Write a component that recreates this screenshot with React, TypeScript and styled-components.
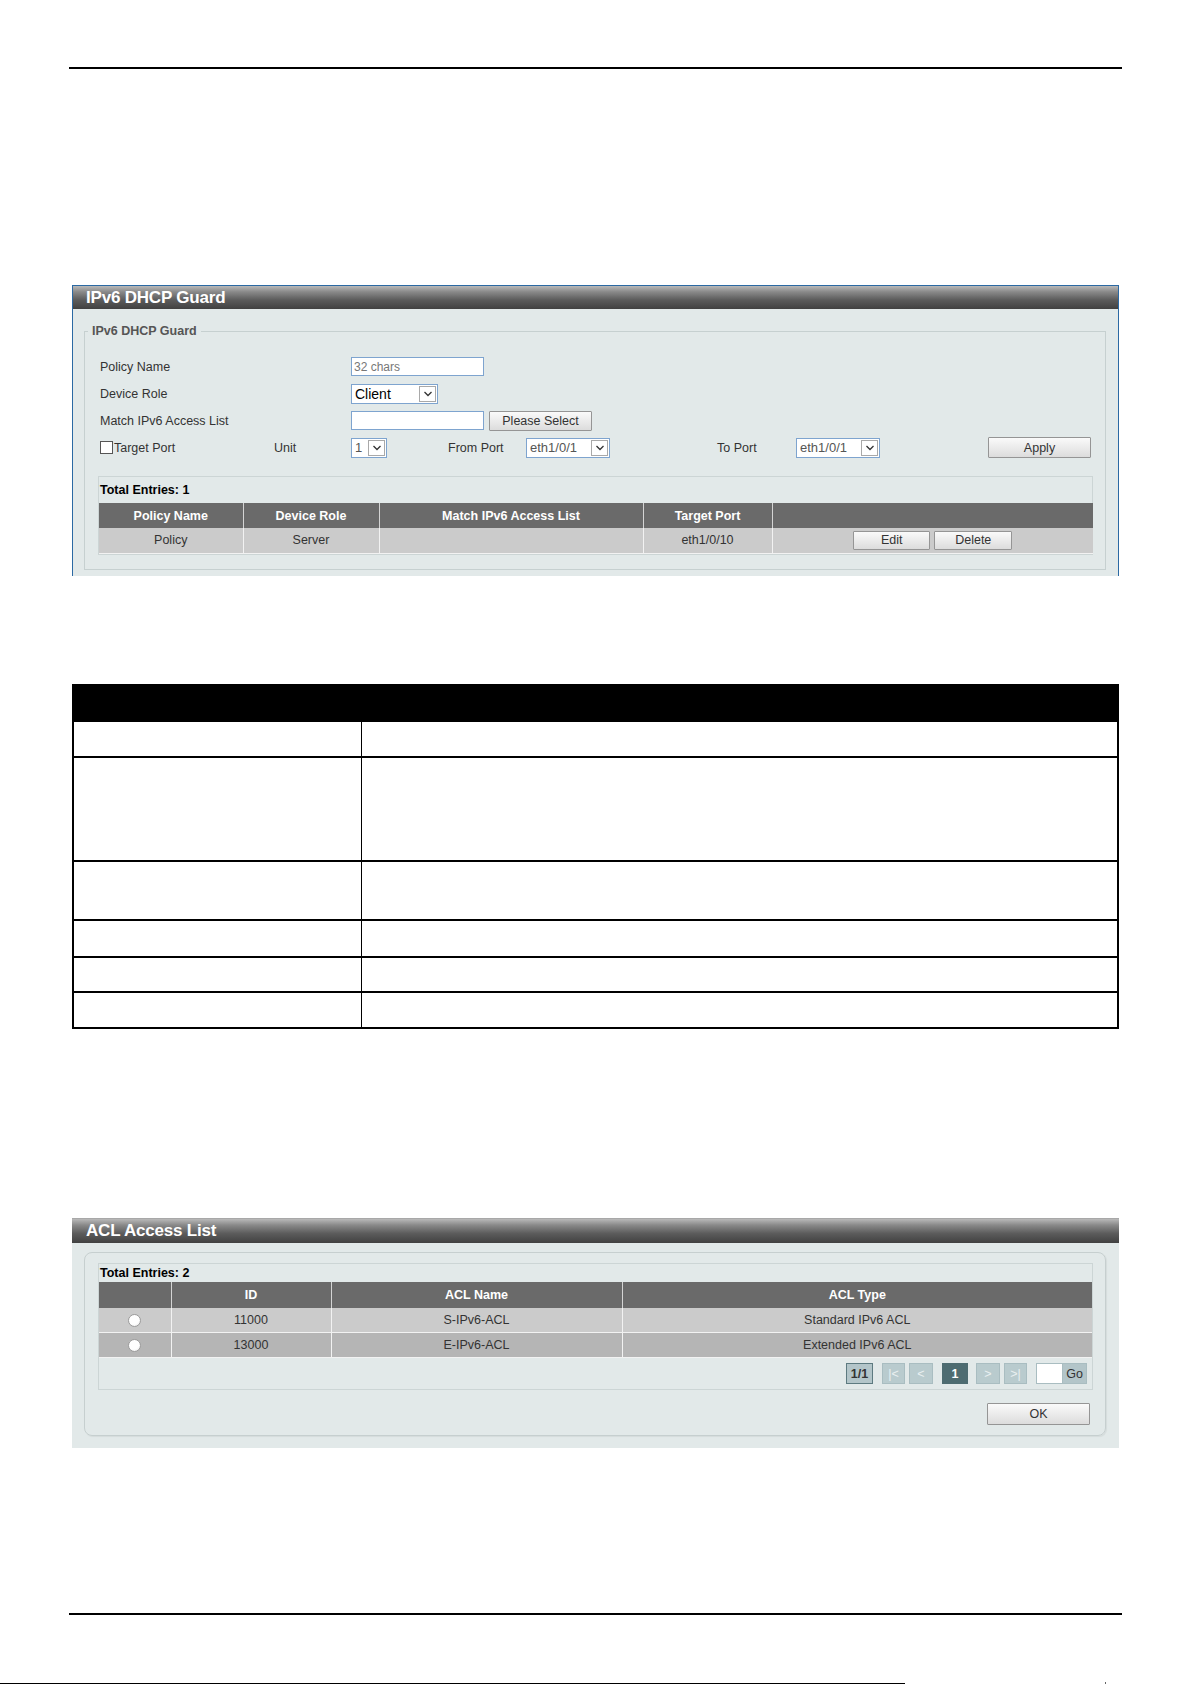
import React from "react";
import styled, { createGlobalStyle } from "styled-components";

const GlobalStyle = createGlobalStyle`
  html, body {
    margin: 0;
    padding: 0;
    background: #fff;
  }
  body {
    font-family: "Liberation Sans", Arial, sans-serif;
    font-size: 12.5px;
    color: #333;
  }
  * {
    box-sizing: border-box;
  }
`;

const Page = styled.div`
  width: 1192px;
  height: 1684px;
  display: flex;
  flex-direction: column;
  overflow: hidden;

  & > * {
    flex-shrink: 0;
  }
`;

const Rule = styled.div<{ $top: number }>`
  margin: ${(p) => p.$top}px 0 0 69px;
  width: 1053px;
  height: 2px;
  background: #000;
`;

const Footer = styled.div`
  margin-top: 67px;
  display: flex;
  align-items: flex-end;
  height: 2px;
`;

const FooterLine = styled.div`
  width: 905px;
  height: 1px;
  background: #000;
`;

const FooterTick = styled.div`
  margin-left: 200px;
  width: 1px;
  height: 2px;
  background: #666;
`;

/* ---- web panel ---- */

const Panel = styled.section<{ $top: number; $framed?: boolean }>`
  margin: ${(p) => p.$top}px 0 0 72px;
  width: 1047px;
  background: #e2e9e9;
  border-top: 1px solid ${(p) => (p.$framed ? "#2b69a3" : "#a8a8a8")};
  border-left: ${(p) => (p.$framed ? "1px solid #2b69a3" : "none")};
  border-right: ${(p) => (p.$framed ? "1px solid #2b69a3" : "none")};
`;

const PanelTitle = styled.div<{ $h: number; $pad: number }>`
  height: ${(p) => p.$h}px;
  padding-left: ${(p) => p.$pad}px;
  display: flex;
  align-items: center;
  background: linear-gradient(#b9b9b9 0%, #8a8a8a 25%, #5c5c5c 60%, #414141 100%);
  color: #fff;
  font-weight: bold;
  font-size: 17px;
  letter-spacing: -0.2px;
`;

const PanelBody = styled.div<{ $pad: string }>`
  padding: ${(p) => p.$pad};
`;

const Group = styled.fieldset`
  margin: 0 12px 0 11px;
  padding: 0 12px 14px 13px;
  border: 1px solid #c6d0d0;
  min-width: 0;
`;

const GroupLegend = styled.legend`
  margin-left: -10px;
  padding: 0 4px;
  font-weight: bold;
  color: #555;
  font-size: 12.5px;
  line-height: 14px;
`;

const RoundGroup = styled.div`
  margin: 0 13px 0 12px;
  padding: 10px 12px 10px 13px;
  border: 1px solid #c6cfcf;
  border-radius: 8px;
  box-shadow: 1px 1px 1px rgba(0, 0, 0, 0.06);
`;

const Form = styled.div`
  margin-top: 15px;
  padding-left: 2px;
  display: flex;
  flex-direction: column;
`;

const FormRow = styled.div`
  height: 27px;
  display: flex;
  align-items: center;
`;

const Cell = styled.div<{ $w: number }>`
  width: ${(p) => p.$w}px;
  flex: none;
  display: flex;
  align-items: center;
  color: #333;
`;

const TextInput = styled.input<{ $w: number }>`
  width: ${(p) => p.$w}px;
  height: 19px;
  border: 1px solid #7ea4cf;
  background: #fff;
  padding: 0 2px;
  font: 12px "Liberation Sans", Arial, sans-serif;
  color: #000;
  outline: none;
  &::placeholder {
    color: #777;
  }
`;

const SelectBox = styled.div<{ $w: number; $muted?: boolean }>`
  width: ${(p) => p.$w}px;
  height: 20px;
  border: 1px solid #7ea4cf;
  background: #fff;
  display: flex;
  align-items: center;
  justify-content: space-between;
  padding: 0 1px 0 3px;
  font-size: ${(p) => (p.$muted ? 13 : 14)}px;
  color: ${(p) => (p.$muted ? "#555" : "#000")};
`;

const SelectArrow = styled.span`
  width: 17px;
  height: 16px;
  border: 1px solid #a9a9a9;
  background: #fff;
  display: flex;
  align-items: center;
  justify-content: center;
`;

const Button = styled.button<{ $w: number; $h?: number; $gap?: number }>`
  width: ${(p) => p.$w}px;
  height: ${(p) => p.$h ?? 20}px;
  margin-left: ${(p) => p.$gap ?? 0}px;
  padding: 0;
  border: 1px solid #959595;
  border-radius: 1px;
  background: linear-gradient(#fafafa, #dcdcdc);
  font: 12.5px "Liberation Sans", Arial, sans-serif;
  color: #333;
`;

const Check = styled.span`
  width: 13px;
  height: 13px;
  margin-right: 1px;
  border: 1px solid #555;
  background: #fff;
`;

/* ---- entry lists ---- */

const ListBox = styled.div<{ $top: number }>`
  margin-top: ${(p) => p.$top}px;
  border: 1px solid #ccd5d5;
`;

const Total = styled.div<{ $h: number }>`
  height: ${(p) => p.$h}px;
  padding-left: 1px;
  display: flex;
  align-items: center;
  font-weight: bold;
  color: #000;
`;

const Grid = styled.table`
  width: 100%;
  border-collapse: collapse;
  table-layout: fixed;
`;

const Col = styled.col<{ $w: number }>`
  width: ${(p) => p.$w}px;
`;

const Th = styled.th<{ $h: number }>`
  height: ${(p) => p.$h}px;
  padding: 0;
  background: #6a6a6a;
  color: #fff;
  font-weight: bold;
  font-size: 12.5px;
  text-align: center;
  border-left: 1px solid #d4d4d4;
  &:first-child {
    border-left: none;
  }
`;

const Td = styled.td<{ $h: number; $dark?: boolean }>`
  height: ${(p) => p.$h}px;
  padding: 0;
  background: ${(p) => (p.$dark ? "#b5b5b5" : "#cbcbcb")};
  color: #333;
  font-size: 12.5px;
  text-align: center;
  border-left: 1px solid #f2f2f2;
  border-bottom: 1px solid #f2f2f2;
  &:first-child {
    border-left: none;
  }
`;

const CellButtons = styled.div`
  display: flex;
  justify-content: center;
  gap: 4px;
`;

const Radio = styled.span`
  display: inline-block;
  width: 13px;
  height: 13px;
  border-radius: 50%;
  border: 1px solid #9a9a9a;
  background: radial-gradient(circle at 40% 35%, #fff 55%, #e4e4e4 100%);
  vertical-align: middle;
`;

const Pager = styled.div`
  height: 31px;
  padding-right: 5px;
  display: flex;
  align-items: center;
  justify-content: flex-end;
`;

type PageKind = "info" | "off" | "current" | "go";

const PageBtn = styled.span<{ $kind: PageKind; $w: number; $gap: number }>`
  width: ${(p) => p.$w}px;
  height: 21px;
  margin-left: ${(p) => p.$gap}px;
  display: flex;
  align-items: center;
  justify-content: center;
  font-size: 12.5px;
  font-weight: ${(p) => (p.$kind === "info" || p.$kind === "current" ? "bold" : "normal")};
  color: ${(p) =>
    p.$kind === "off" ? "#e9f0f1" : p.$kind === "current" ? "#fff" : "#333"};
  background: ${(p) =>
    p.$kind === "current" ? "#4e6c71" : p.$kind === "off" ? "#b9cbce" : "#b3c5c9"};
  border: 1px solid
    ${(p) => (p.$kind === "info" ? "#5d7a80" : p.$kind === "current" ? "#4e6c71" : "#a9bdc1")};
`;

const PageInput = styled.span`
  width: 26px;
  height: 21px;
  margin-left: 9px;
  background: #fff;
  border: 1px solid #a9bdc1;
  border-right: none;
`;

const Actions = styled.div`
  margin-top: 13px;
  padding-right: 3px;
  display: flex;
  justify-content: flex-end;
`;

/* ---- parameter description table ---- */

const SpecTable = styled.table`
  margin: 108px 0 0 72px;
  width: 1045px;
  border-collapse: collapse;
  border: 2px solid #000;
  table-layout: fixed;
`;

const SpecHead = styled.th`
  height: 36px;
  background: #000;
  padding: 0;
`;

const SpecCell = styled.td<{ $h: number }>`
  height: ${(p) => p.$h}px;
  padding: 0;
  border-top: 2px solid #000;
  border-left: 1px solid #000;
  &:first-child {
    border-left: none;
  }
`;

const Chevron = () => (
  <svg width="12" height="12" viewBox="0 0 12 12">
    <polyline points="2.5,4 6,7.5 9.5,4" fill="none" stroke="#333" strokeWidth="1.3" />
  </svg>
);

const Select = ({ w, value, muted }: { w: number; value: string; muted?: boolean }) => (
  <SelectBox $w={w} $muted={muted}>
    <span>{value}</span>
    <SelectArrow>
      <Chevron />
    </SelectArrow>
  </SelectBox>
);

const specRows = [36, 104, 59, 37, 35, 36];

const aclRows = [
  { id: "11000", name: "S-IPv6-ACL", type: "Standard IPv6 ACL" },
  { id: "13000", name: "E-IPv6-ACL", type: "Extended IPv6 ACL" },
];

export default function App() {
  return (
    <Page>
      <GlobalStyle />
      <Rule $top={67} />

      <Panel $top={216} $framed>
        <PanelTitle $h={23} $pad={13}>
          IPv6 DHCP Guard
        </PanelTitle>
        <PanelBody $pad="15px 0 6px">
          <Group>
            <GroupLegend>IPv6 DHCP Guard</GroupLegend>
            <Form>
              <FormRow>
                <Cell $w={251}>Policy Name</Cell>
                <TextInput $w={133} placeholder="32 chars" />
              </FormRow>
              <FormRow>
                <Cell $w={251}>Device Role</Cell>
                <Select w={87} value="Client" />
              </FormRow>
              <FormRow>
                <Cell $w={251}>Match IPv6 Access List</Cell>
                <TextInput $w={133} />
                <Button $w={103} $gap={5}>
                  Please Select
                </Button>
              </FormRow>
              <FormRow>
                <Cell $w={174}>
                  <Check />
                  Target Port
                </Cell>
                <Cell $w={77}>Unit</Cell>
                <Cell $w={97}>
                  <Select w={36} value="1" muted />
                </Cell>
                <Cell $w={78}>From Port</Cell>
                <Cell $w={191}>
                  <Select w={84} value="eth1/0/1" muted />
                </Cell>
                <Cell $w={79}>To Port</Cell>
                <Cell $w={192}>
                  <Select w={84} value="eth1/0/1" muted />
                </Cell>
                <Button $w={103} $h={21}>
                  Apply
                </Button>
              </FormRow>
            </Form>

            <ListBox $top={15}>
              <Total $h={26}>Total Entries: 1</Total>
              <Grid>
                <colgroup>
                  <Col $w={144} />
                  <Col $w={136} />
                  <Col $w={264} />
                  <Col $w={129} />
                  <Col $w={321} />
                </colgroup>
                <thead>
                  <tr>
                    <Th $h={25}>Policy Name</Th>
                    <Th $h={25}>Device Role</Th>
                    <Th $h={25}>Match IPv6 Access List</Th>
                    <Th $h={25}>Target Port</Th>
                    <Th $h={25} />
                  </tr>
                </thead>
                <tbody>
                  <tr>
                    <Td $h={25}>Policy</Td>
                    <Td $h={25}>Server</Td>
                    <Td $h={25} />
                    <Td $h={25}>eth1/0/10</Td>
                    <Td $h={25}>
                      <CellButtons>
                        <Button $w={77} $h={19}>
                          Edit
                        </Button>
                        <Button $w={78} $h={19}>
                          Delete
                        </Button>
                      </CellButtons>
                    </Td>
                  </tr>
                </tbody>
              </Grid>
            </ListBox>
          </Group>
        </PanelBody>
      </Panel>

      <SpecTable>
        <colgroup>
          <Col $w={288} />
          <Col $w={757} />
        </colgroup>
        <thead>
          <tr>
            <SpecHead />
            <SpecHead />
          </tr>
        </thead>
        <tbody>
          {specRows.map((h, i) => (
            <tr key={i}>
              <SpecCell $h={h} />
              <SpecCell $h={h} />
            </tr>
          ))}
        </tbody>
      </SpecTable>

      <Panel $top={189}>
        <PanelTitle $h={24} $pad={14}>
          ACL Access List
        </PanelTitle>
        <PanelBody $pad="9px 0 12px">
          <RoundGroup>
            <ListBox $top={0}>
              <Total $h={18}>Total Entries: 2</Total>
              <Grid>
                <colgroup>
                  <Col $w={72} />
                  <Col $w={160} />
                  <Col $w={291} />
                  <Col $w={470} />
                </colgroup>
                <thead>
                  <tr>
                    <Th $h={26} />
                    <Th $h={26}>ID</Th>
                    <Th $h={26}>ACL Name</Th>
                    <Th $h={26}>ACL Type</Th>
                  </tr>
                </thead>
                <tbody>
                  {aclRows.map((r, i) => (
                    <tr key={r.id}>
                      <Td $h={25} $dark={i === 1}>
                        <Radio />
                      </Td>
                      <Td $h={25} $dark={i === 1}>
                        {r.id}
                      </Td>
                      <Td $h={25} $dark={i === 1}>
                        {r.name}
                      </Td>
                      <Td $h={25} $dark={i === 1}>
                        {r.type}
                      </Td>
                    </tr>
                  ))}
                </tbody>
              </Grid>
              <Pager>
                <PageBtn $kind="info" $w={27} $gap={0}>
                  1/1
                </PageBtn>
                <PageBtn $kind="off" $w={23} $gap={9}>
                  |&lt;
                </PageBtn>
                <PageBtn $kind="off" $w={24} $gap={4}>
                  &lt;
                </PageBtn>
                <PageBtn $kind="current" $w={26} $gap={9}>
                  1
                </PageBtn>
                <PageBtn $kind="off" $w={24} $gap={8}>
                  &gt;
                </PageBtn>
                <PageBtn $kind="off" $w={23} $gap={4}>
                  &gt;|
                </PageBtn>
                <PageInput />
                <PageBtn $kind="go" $w={25} $gap={0}>
                  Go
                </PageBtn>
              </Pager>
            </ListBox>
            <Actions>
              <Button $w={103} $h={22}>
                OK
              </Button>
            </Actions>
          </RoundGroup>
        </PanelBody>
      </Panel>

      <Rule $top={165} />
      <Footer>
        <FooterLine />
        <FooterTick />
      </Footer>
    </Page>
  );
}
